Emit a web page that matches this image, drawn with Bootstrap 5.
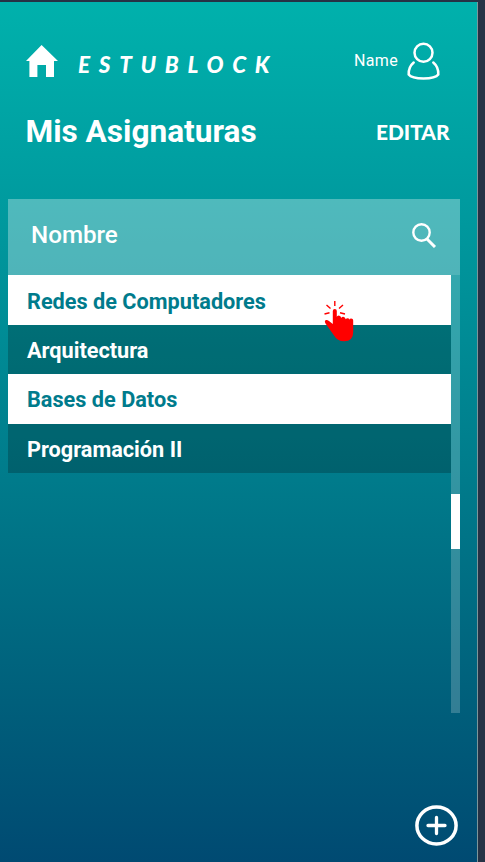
<!DOCTYPE html>
<html lang="es">
<head>
<meta charset="utf-8">
<meta name="viewport" content="width=device-width, initial-scale=1">
<title>Estublock</title>
<link href="https://cdn.jsdelivr.net/npm/bootstrap@5.3.0/dist/css/bootstrap.min.css" rel="stylesheet">
<style>
body{background:#263245;font-family:Roboto,"Liberation Sans",sans-serif;overflow:hidden}
.screen{width:478px;height:860px;margin-top:2px;border-right:1px solid #7d969b;background:linear-gradient(#00b1ac 0,#009b9f 198px,#007b8b 478px,#005f7b 700px,#004a72 860px)}
svg{display:block;flex:none}
.topbar{height:94px;padding:0 37px 0 25.5px}
.brand{font:italic 900 22.5px/30px Lato,sans-serif;letter-spacing:8.7px;margin:6px 0 0 20.500px;padding-top:8px}
.user{font-size:16px;letter-spacing:.35px;margin-right:9px}
.titlebar{height:103px;padding:14px 27.5px 0 25.5px}
.titlebar h1{font-size:31.6px;line-height:44px;font-weight:700}
.edit{font:900 20.9px/44px Lato,sans-serif}
.subjects{width:452px;margin-left:8px}
.search-head{height:76px;background:rgba(255,255,255,.31);padding:0 23px 4px 23px;font-size:24.2px;font-weight:500}
.subject{height:49.5px;padding:2px 19px 0;font-size:21.7px;font-weight:700;line-height:47.5px}
.subject:first-child{padding-top:3px}
.subject:nth-child(odd){background:#fff;color:#007b8c}
.subject:nth-child(even){background:rgba(0,0,0,.21)}
.track{width:9px;height:438px;background:rgba(255,255,255,.2);padding-top:219px}
.thumb{height:55px;background:#fff}
.tap{left:323px;top:298px}
.add-row{padding:91px 19px 0 0}
</style>
</head>
<body>
<main class="screen text-white">
  <header class="topbar d-flex align-items-center">
    <svg class="mt-4" width="32" height="34" viewBox="0 0 32 34" fill="#fff"><path d="M15.6 1 32 17h-4v16h-8V21h-8.600v12h-8V17H0z"/></svg>
    <span class="brand mt-4">ESTUBLOCK</span>
    <span class="user ms-auto mt-4">Name</span>
    <svg class="mt-4" width="33" height="38" viewBox="0 0 33 38" fill="none" stroke="#fff" stroke-width="2.5" stroke-linecap="round"><circle cx="16.500" cy="10.700" r="9"/><path d="M6.700 20.500C2.500 24 1.500 28 1.700 32.500 5.500 37.800 27.500 37.800 31.300 32.500 31.500 28 30.500 24 26.300 20.500"/></svg>
  </header>
  <div class="titlebar d-flex justify-content-between">
    <h1 class="mb-0">Mis Asignaturas</h1>
    <span class="edit">EDITAR</span>
  </div>
  <section class="subjects">
    <div class="search-head d-flex justify-content-between align-items-center">
      <span>Nombre</span>
      <svg width="26" height="26" viewBox="0 0 26 26" fill="none" stroke="#fff" stroke-width="2.400"><circle cx="10.500" cy="10.500" r="8.200"/><path d="m16 17 8 8" stroke-width="3"/></svg>
    </div>
    <div class="d-flex">
      <div class="flex-grow-1">
        <div class="subject">Redes de Computadores</div>
        <div class="subject">Arquitectura</div>
        <div class="subject">Bases de Datos</div>
        <div class="subject">Programación II</div>
      </div>
      <div class="track"><div class="thumb"></div></div>
    </div>
  </section>
  <div class="add-row d-flex justify-content-end">
    <svg width="43" height="42" viewBox="0 0 43 42" fill="none" stroke="#fff" stroke-width="3.500"><ellipse cx="21.500" cy="21.500" rx="19.600" ry="18.500"/><path d="M13 21.500h17M21.500 13.500v16" stroke-linecap="round" stroke-width="3.300"/></svg>
  </div>
</main>
<svg class="tap position-absolute" width="34" height="46" viewBox="0 0 34 46" fill="none" stroke="#f00" stroke-width="1.400"><path d="M11.800 3v5M3.500 7l4 3.500M20 7l-4 3.500M1.500 16l5-1.200M22 16l-5-1.200"/><path fill="#f00" stroke="none" d="M9.800 13q0-2 2-2t2 2v6q0-1.500 2-1.500t2.500 2.500q.3-1.300 2-1.300t2.500 2.500q.3-1 2-1 1.800 0 1.800 1.500 0-1.100 1.600-1.100 2 0 2 2V34q0 9.300-9 9.300-7 0-10.500-6.300L2.500 25.500Q1 22.500 3 22q1.500-.2 3 1l3.800 3z"/></svg>
<script src="https://cdn.jsdelivr.net/npm/bootstrap@5.3.0/dist/js/bootstrap.bundle.min.js"></script>
</body>
</html>
